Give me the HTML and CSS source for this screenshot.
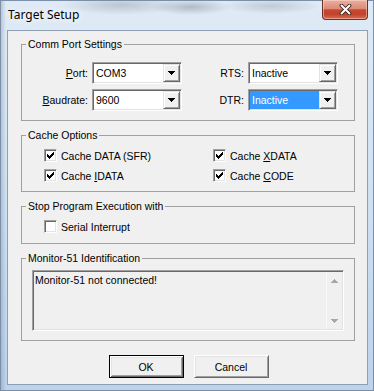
FILE: index.html
```html
<!DOCTYPE html>
<html>
<head>
<meta charset="utf-8">
<title>Target Setup</title>
<link rel="stylesheet" href="styles.css">
</head>
<body>
<div class="window">
  <div class="titlebar">
    <span class="title">Target Setup</span>
    <span class="close">
      <svg width="13" height="11" viewBox="0 0 13 11"><path class="xo" d="M2.5 1.5 L10.5 9.5 M10.5 1.5 L2.5 9.5"/><path class="xi" d="M2.5 1.5 L10.5 9.5 M10.5 1.5 L2.5 9.5"/></svg>
    </span>
  </div>
  <div class="client">
    <fieldset class="group">
      <legend>Comm Port Settings</legend>
      <div class="comm-grid">
        <span class="lbl"><u>P</u>ort:</span>
        <div class="combo"><span class="val">COM3</span><span class="drop"><svg width="7" height="4" viewBox="0 0 7 4"><path d="M0 0h7v1H0zM1 1h5v1H1zM2 2h3v1H2zM3 3h1v1H3z"/></svg></span></div>
        <span class="lbl">RTS:</span>
        <div class="combo"><span class="val">Inactive</span><span class="drop"><svg width="7" height="4" viewBox="0 0 7 4"><path d="M0 0h7v1H0zM1 1h5v1H1zM2 2h3v1H2zM3 3h1v1H3z"/></svg></span></div>
        <span class="lbl"><u>B</u>audrate:</span>
        <div class="combo"><span class="val">9600</span><span class="drop"><svg width="7" height="4" viewBox="0 0 7 4"><path d="M0 0h7v1H0zM1 1h5v1H1zM2 2h3v1H2zM3 3h1v1H3z"/></svg></span></div>
        <span class="lbl">DTR:</span>
        <div class="combo"><span class="val sel">Inactive</span><span class="drop"><svg width="7" height="4" viewBox="0 0 7 4"><path d="M0 0h7v1H0zM1 1h5v1H1zM2 2h3v1H2zM3 3h1v1H3z"/></svg></span></div>
      </div>
    </fieldset>

    <fieldset class="group">
      <legend>Cache Options</legend>
      <div class="check-grid">
        <div class="check"><span class="cb"><svg width="7" height="7" viewBox="0 0 7 7"><path d="M6 0h1v1H6zM5 1h2v1H5zM0 2h1v1H0zM4 2h3v1H4zM0 3h2v1H0zM3 3h3v1H3zM0 4h5v1H0zM1 5h3v1H1zM2 6h1v1H2z"/></svg></span><span>Cache DATA (SFR)</span></div>
        <div class="check"><span class="cb"><svg width="7" height="7" viewBox="0 0 7 7"><path d="M6 0h1v1H6zM5 1h2v1H5zM0 2h1v1H0zM4 2h3v1H4zM0 3h2v1H0zM3 3h3v1H3zM0 4h5v1H0zM1 5h3v1H1zM2 6h1v1H2z"/></svg></span><span>Cache <u>X</u>DATA</span></div>
        <div class="check"><span class="cb"><svg width="7" height="7" viewBox="0 0 7 7"><path d="M6 0h1v1H6zM5 1h2v1H5zM0 2h1v1H0zM4 2h3v1H4zM0 3h2v1H0zM3 3h3v1H3zM0 4h5v1H0zM1 5h3v1H1zM2 6h1v1H2z"/></svg></span><span>Cache <u>I</u>DATA</span></div>
        <div class="check"><span class="cb"><svg width="7" height="7" viewBox="0 0 7 7"><path d="M6 0h1v1H6zM5 1h2v1H5zM0 2h1v1H0zM4 2h3v1H4zM0 3h2v1H0zM3 3h3v1H3zM0 4h5v1H0zM1 5h3v1H1zM2 6h1v1H2z"/></svg></span><span>Cache <u>C</u>ODE</span></div>
      </div>
    </fieldset>

    <fieldset class="group">
      <legend>Stop Program Execution with</legend>
      <div class="stop-inner">
        <div class="check"><span class="cb"></span><span>Serial Interrupt</span></div>
      </div>
    </fieldset>

    <fieldset class="group">
      <legend>Monitor-51 Identification</legend>
      <div class="mon-inner">
        <div class="textbox">
          <div class="tb-text">Monitor-51 not connected!</div>
          <div class="vscroll">
            <span class="sbtn"><svg width="7" height="4" viewBox="0 0 7 4"><path d="M3 0h1v1H3zM2 1h3v1H2zM1 2h5v1H1zM0 3h7v1H0z"/></svg></span>
            <span class="sbtn"><svg width="7" height="4" viewBox="0 0 7 4"><path d="M0 0h7v1H0zM1 1h5v1H1zM2 2h3v1H2zM3 3h1v1H3z"/></svg></span>
          </div>
        </div>
      </div>
    </fieldset>

    <div class="buttons">
      <button class="btn default">OK</button>
      <button class="btn">Cancel</button>
    </div>
  </div>
</div>
</body>
</html>
```

FILE: styles.css
```css
* { box-sizing: border-box; }
html, body { margin: 0; padding: 0; }
body {
  width: 374px;
  height: 391px;
  overflow: hidden;
  font-family: "Liberation Sans", Arial, sans-serif;
  font-size: 10.5px;
  color: #000;
  background: #c8dcef;
}
.window {
  width: 374px;
  height: 391px;
  display: flex;
  flex-direction: column;
  border: 1px solid #7b8fa8;
  background:
    radial-gradient(ellipse 60px 10px at 120px 4px, rgba(120,130,140,0.35), transparent),
    radial-gradient(ellipse 40px 8px at 190px 6px, rgba(90,100,110,0.35), transparent),
    radial-gradient(ellipse 50px 8px at 270px 5px, rgba(120,130,140,0.3), transparent),
    linear-gradient(to right, rgba(80,100,120,0.25) 0, transparent 5px),
    linear-gradient(to bottom, #dfeaf6 0%, #d3e3f3 40%, #bcd3eb 100%);
}
.titlebar {
  height: 29px;
  display: flex;
  align-items: flex-start;
}
.title {
  font-family: "Noto Sans", "Liberation Sans", sans-serif;
  font-size: 12px;
  line-height: 28px;
  padding-left: 7px;
  text-shadow: 0 0 6px #fff, 0 0 10px #fff;
}
.close {
  margin-left: auto;
  margin-right: 5px;
  margin-top: -1px;
  width: 46px;
  height: 20px;
  display: flex;
  align-items: center;
  justify-content: center;
  border: 1px solid #6a3026;
  border-top: none;
  border-radius: 0 0 4px 4px;
  background: linear-gradient(to bottom, #eab0a2 0%, #dd8a76 45%, #c54a31 52%, #c2432b 75%, #dc6c4d 100%);
  box-shadow: inset 0 0 0 1px rgba(255,230,220,0.45);
}
.close svg { display: block; }
.xo { fill: none; stroke: #3e1e18; stroke-width: 3.8; stroke-linecap: round; }
.xi { fill: none; stroke: #ffffff; stroke-width: 2; stroke-linecap: round; }

.client {
  flex: 1;
  margin: 0 5px 5px 6px;
  border: 1px solid #8e9fb3;
  background: #f0f0f0;
  padding: 7px 12px 0 13px;
  display: flex;
  flex-direction: column;
}

.group {
  margin: 8px 0 0 0;
  padding: 0;
  min-width: 0;
  border: 1px solid #a0a0a0;
}
.group:first-child { margin-top: 0; }
.group legend {
  margin-left: 4px;
  padding: 0 2px;
  line-height: 13px;
  height: 13px;
}

.comm-grid {
  padding: 11px 0 9px 0;
  display: grid;
  grid-template-columns: 66px 90px 58px 90px;
  grid-template-rows: 22px 22px;
  column-gap: 4px;
  row-gap: 5px;
}
.lbl {
  display: flex;
  align-items: center;
  justify-content: flex-end;
}
.combo {
  display: flex;
  height: 22px;
  border: 1px solid;
  border-color: #a0a0a0 #ffffff #ffffff #a0a0a0;
  box-shadow: inset 1px 1px 0 #696969, inset -1px -1px 0 #e3e3e3;
  background: #fff;
  padding: 1px;
}
.val {
  flex: 1;
  display: flex;
  align-items: center;
  padding-left: 2px;
}
.val.sel {
  background: #3399ff;
  color: #fff;
}
.drop {
  width: 17px;
  display: flex;
  align-items: center;
  justify-content: center;
  background: #f0f0f0;
  border: 1px solid;
  border-color: #e3e3e3 #696969 #696969 #e3e3e3;
  box-shadow: inset 1px 1px 0 #fff, inset -1px -1px 0 #a0a0a0;
}
.drop svg, .sbtn svg { display: block; }
.drop path { fill: #000; }

.check-grid {
  padding: 5px 0 7px 22px;
  display: grid;
  grid-template-columns: 169px auto;
  grid-auto-rows: 17px;
  row-gap: 3px;
}
.stop-inner {
  padding: 5px 0 8px 22px;
  height: auto;
}
.stop-inner .check { height: 17px; }
.check {
  display: flex;
  align-items: center;
  gap: 4px;
}
.cb {
  width: 13px;
  height: 13px;
  flex: none;
  display: flex;
  align-items: center;
  justify-content: center;
  border: 1px solid;
  border-color: #a0a0a0 #ffffff #ffffff #a0a0a0;
  box-shadow: inset 1px 1px 0 #696969, inset -1px -1px 0 #e3e3e3;
  background: #fff;
}
.cb svg { display: block; }
.cb path { fill: #000; }

.mon-inner {
  padding: 5px 10px 9px 10px;
}
.textbox {
  height: 61px;
  display: flex;
  border: 1px solid;
  border-color: #a0a0a0 #ffffff #ffffff #a0a0a0;
  box-shadow: inset 1px 1px 0 #696969, inset -1px -1px 0 #e3e3e3;
  background: #f0f0f0;
  padding: 1px;
}
.tb-text {
  flex: 1;
  padding: 2px 0 0 1px;
  line-height: 13px;
}
.vscroll {
  width: 16px;
  display: flex;
  flex-direction: column;
  justify-content: space-between;
  border-left: 1px solid #fafafa;
}
.sbtn {
  height: 17px;
  display: flex;
  align-items: center;
  justify-content: center;
}
.sbtn path { fill: #a7a7a7; }

.buttons {
  display: flex;
  justify-content: center;
  gap: 10px;
  margin-top: 14px;
  padding-left: 1px;
}
.btn {
  width: 75px;
  height: 23px;
  margin: 0;
  padding: 0;
  font-family: "Liberation Sans", Arial, sans-serif;
  font-size: 10.5px;
  color: #000;
  background: #f0f0f0;
  border: 1px solid;
  border-color: #ffffff #696969 #696969 #ffffff;
  box-shadow: inset 1px 1px 0 #e3e3e3, inset -1px -1px 0 #a0a0a0;
}
.btn.default {
  border: 1px solid #000;
  box-shadow: inset 1px 1px 0 #fff, inset -1px -1px 0 #696969, inset 2px 2px 0 #e3e3e3, inset -2px -2px 0 #a0a0a0;
}
```
